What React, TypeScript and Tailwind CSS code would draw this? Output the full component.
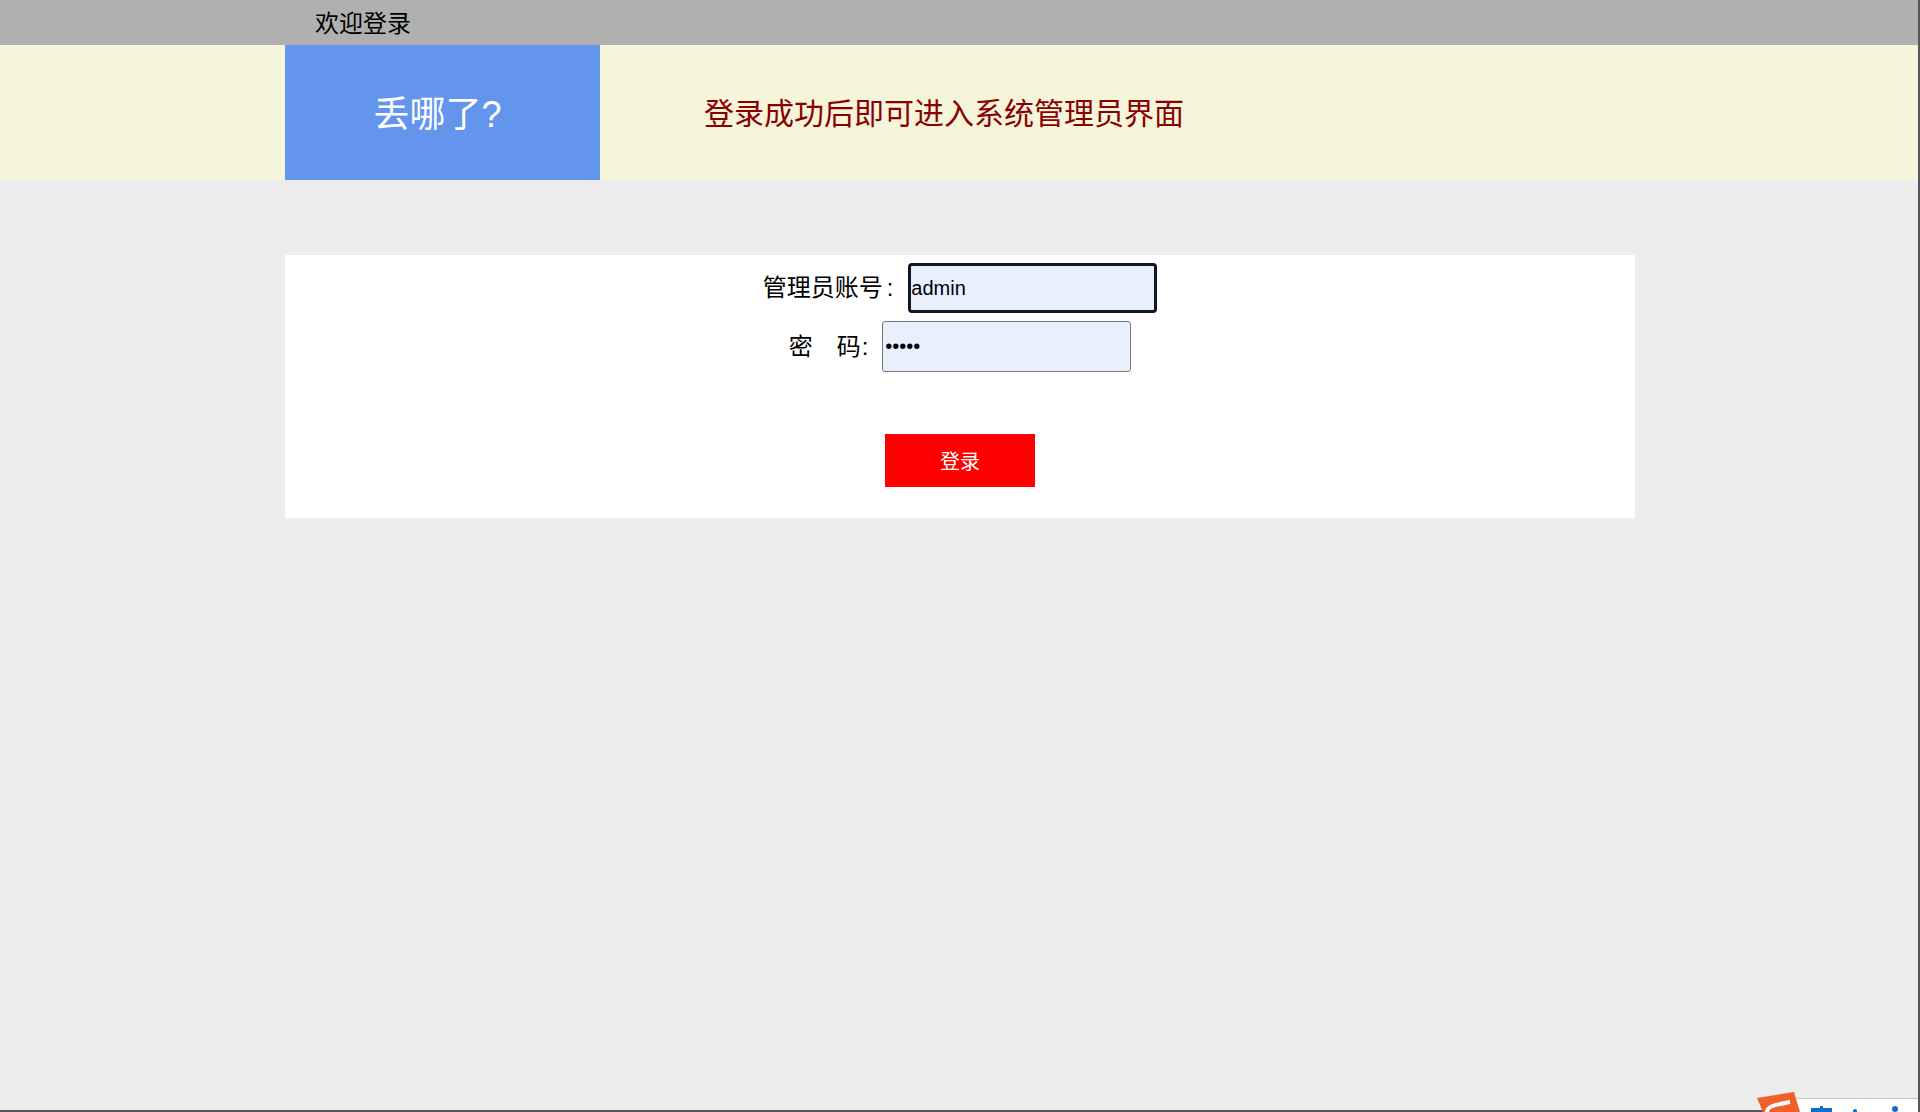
export default function App() {
  return (
    <div className="relative flex h-[1112px] flex-col overflow-hidden bg-[#ececec] text-black font-['Liberation_Sans','Noto_Sans_CJK_SC',sans-serif]">
      <header className="h-[45px] bg-[#b0b0b0] pl-[315px] pt-[1px] text-[24px] leading-[45px]">欢迎登录</header>
      <div className="flex h-[135px] bg-[#f5f5dc] pl-[285px]">
        <div className="flex w-[315px] items-center justify-center bg-[#6495ed] pt-[5px] pr-[10px] text-[36px] text-white">丢哪了?</div>
        <div className="flex items-center pl-[104px] pt-[1px] text-[30px] text-[#8b0000]">登录成功后即可进入系统管理员界面</div>
      </div>
      <main className="mx-[285px] mt-[75px] flex h-[263px] flex-col items-center bg-white pt-2">
        <div className="flex h-[50px] items-center gap-[15px] text-[24px]">
          <label htmlFor="account">管理员账号<span className="ml-[4px]">:</span></label>
          <input id="account" readOnly value="admin" className="h-[50px] w-[249px] rounded-[4px] border-[3px] border-[#101828] bg-[#e8f0fe] px-0 text-[20px] outline-none" />
        </div>
        <div className="mt-2 flex h-[51px] items-center gap-[14px] text-[24px]">
          <label htmlFor="password" className="whitespace-pre">密　码<span className="ml-[1px]">:</span></label>
          <input id="password" type="password" readOnly value="admin" className="h-[51px] w-[249px] rounded-[3px] border border-[#767676] bg-[#e8f0fe] px-[2px] text-[20px] outline-none" />
        </div>
        <button className="mt-[62px] h-[53px] w-[150px] bg-[#ff0000] pt-[2px] text-[20px] text-white">登录</button>
      </main>
      <div className="absolute inset-y-0 right-0 w-[2px] bg-[#55555f]" />
      <div className="absolute inset-x-0 bottom-0 h-[2px] bg-[#55555f]" />
      <div className="absolute right-[2px] bottom-0 h-[14px] w-[128px] border-t border-[#c8c8c8] bg-white">
        <svg width="110" height="6" viewBox="0 0 110 6" className="absolute left-[20px] bottom-0" aria-hidden="true">
          <path d="M10 0h3v2h9v4H1V2h9z" fill="#0b6fd0" />
          <circle cx="45" cy="5" r="2" fill="#0b6fd0" />
          <circle cx="85" cy="3" r="3" fill="#0b6fd0" />
        </svg>
      </div>
      <svg width="44" height="20" viewBox="0 0 44 20" className="absolute bottom-0 left-[1757px]" aria-hidden="true">
        <path d="M0 6 L37 0 L43 20 L6 20 Z" fill="#f2602a" />
        <path d="M10 20 C10 14 18 13 33 10" fill="none" stroke="#fff" strokeWidth="4" />
      </svg>
    </div>
  );
}
